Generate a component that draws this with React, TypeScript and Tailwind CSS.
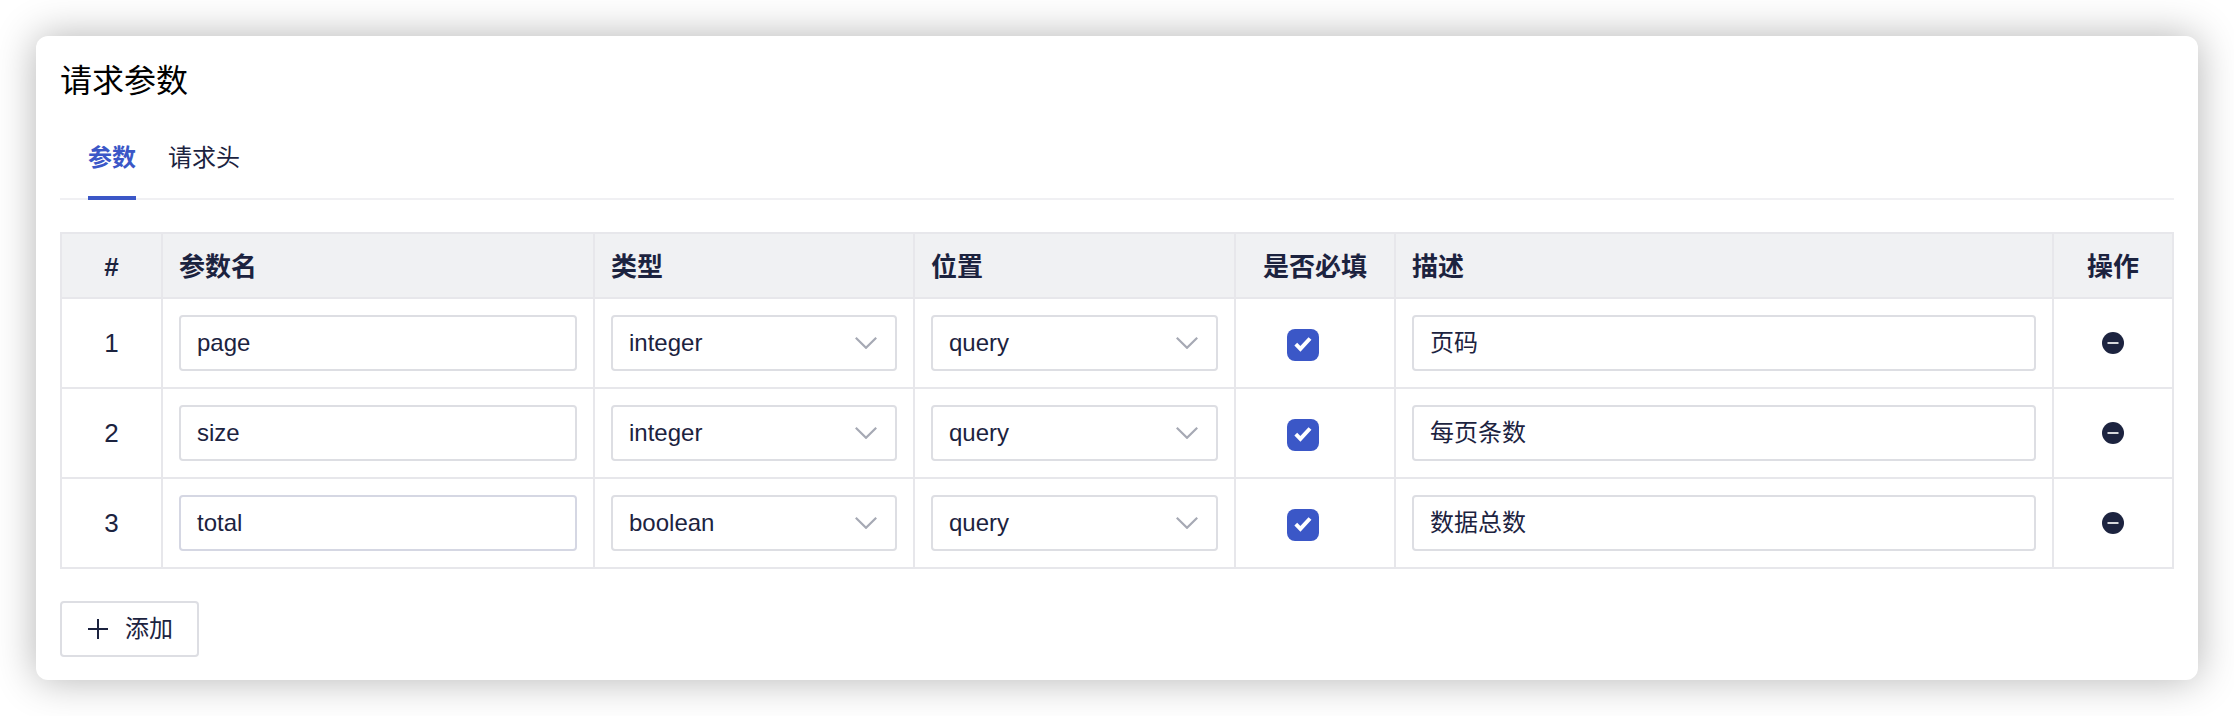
import React from "react";

type Row = {
  name: string;
  type: string;
  position: string;
  description: string;
  focused?: boolean;
};

const rows: Row[] = [
  { name: "page", type: "integer", position: "query", description: "页码" },
  { name: "size", type: "integer", position: "query", description: "每页条数" },
  { name: "total", type: "boolean", position: "query", description: "数据总数", focused: true },
];

const columns = "grid grid-cols-[101px_432px_320px_321px_160px_658px_120px]";
const cell = "flex items-center border-r-2 border-[#e7e7eb] px-4";
const field = "flex h-14 w-full items-center rounded border-2 px-4";

const Input = ({ value, focused }: { value: string; focused?: boolean }) => (
  <div className={`${field} ${focused ? "border-[#d5d7e3]" : "border-[#dddee3]"}`}>
    <span>{value}</span>
  </div>
);

const Select = ({ value }: { value: string }) => (
  <div className={`${field} justify-between border-[#dddee3]`}>
    <span>{value}</span>
    <svg className="mr-0.5 h-3 w-[22px]" viewBox="0 0 22 12" fill="none" stroke="#a6a9b4" strokeWidth="2.2">
      <path d="M0.8 0.8L11 10.8L21.2 0.8" />
    </svg>
  </div>
);

const Checkbox = () => (
  <div className="mt-1 mr-6 flex size-8 items-center justify-center rounded-lg bg-[#3b57c7]">
    <svg className="size-8" viewBox="0 0 32 32" fill="none" stroke="#fff" strokeWidth="4">
      <path d="M8.8 15.2L13.4 19.9L23 9.5" />
    </svg>
  </div>
);

const MinusButton = () => (
  <button>
    <svg className="size-[22px]" viewBox="0 0 22 22">
      <circle cx="11" cy="11" r="11" fill="#1c233f" />
      <rect x="5.5" y="10" width="11" height="2" fill="#d6d7dc" />
    </svg>
  </button>
);

const Tabs = () => (
  <div className="mt-[34px] flex h-[76px] gap-8 border-b-2 border-[#f0f0f3] pl-7">
    <div className="h-[76px] border-b-4 border-[#3b57c7] pt-[18px] font-bold text-[#3b57c7]">参数</div>
    <div className="pt-[18px]">请求头</div>
  </div>
);

const Table = () => (
  <div className="mt-8 border-t-2 border-l-2 border-[#e7e7eb]">
    <div
      className={`${columns} h-[65px] border-b-2 border-[#e7e7eb] bg-[#f0f1f3] text-[26px] leading-[34px] font-bold *:pt-[3px]`}
    >
      <div className={`${cell} justify-center`}>#</div>
      <div className={cell}>参数名</div>
      <div className={cell}>类型</div>
      <div className={cell}>位置</div>
      <div className={`${cell} justify-center`}>是否必填</div>
      <div className={cell}>描述</div>
      <div className={`${cell} justify-center`}>操作</div>
    </div>
    {rows.map((row, i) => (
      <div key={row.name} className={`${columns} h-[90px] border-b-2 border-[#e7e7eb]`}>
        <div className={`${cell} justify-center text-[26px]`}>{i + 1}</div>
        <div className={cell}>
          <Input value={row.name} focused={row.focused} />
        </div>
        <div className={cell}>
          <Select value={row.type} />
        </div>
        <div className={cell}>
          <Select value={row.position} />
        </div>
        <div className={`${cell} justify-center`}>
          <Checkbox />
        </div>
        <div className={cell}>
          <Input value={row.description} />
        </div>
        <div className={`${cell} justify-center`}>
          <MinusButton />
        </div>
      </div>
    ))}
  </div>
);

export default function App() {
  return (
    <div className="h-[716px] w-[2234px] overflow-hidden bg-white p-9 font-['Liberation_Sans','Noto_Sans_CJK_SC',sans-serif] text-2xl text-[#1c233f]">
      <div className="h-[644px] rounded-xl bg-white px-6 pt-[22px] shadow-[0_0_40px_rgba(0,0,0,0.3)]">
        <h1 className="h-8 text-[32px] leading-[46px] text-black">请求参数</h1>
        <Tabs />
        <Table />
        <button className="mt-8 flex h-14 w-[139px] items-center rounded border-2 border-[#dddee3] pl-[26px]">
          <svg className="mr-[17px] size-5" viewBox="0 0 20 20" fill="none" stroke="#1c233f" strokeWidth="2">
            <path d="M0 10H20M10 0V20" />
          </svg>
          添加
        </button>
      </div>
    </div>
  );
}
